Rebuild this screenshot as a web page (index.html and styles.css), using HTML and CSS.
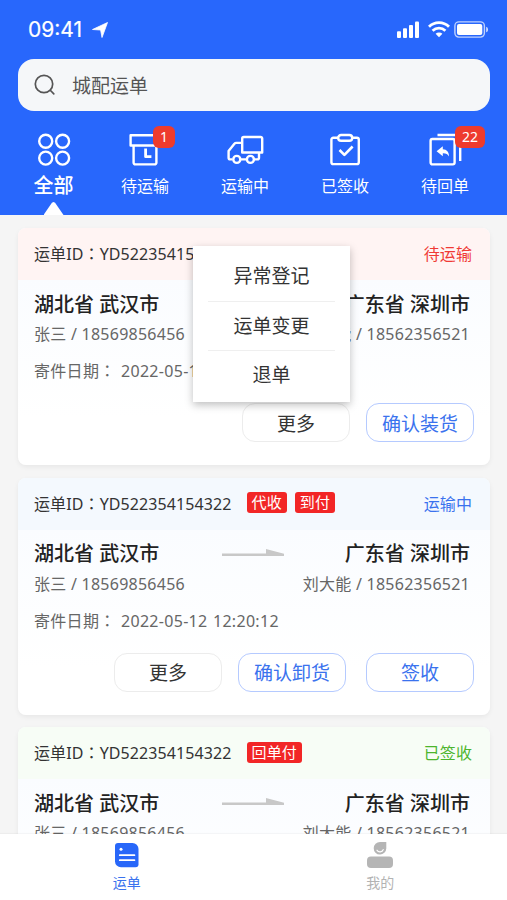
FILE: index.html
```html
<!DOCTYPE html>
<html lang="zh-CN">
  <head>
    <meta charset="utf-8" />
    <meta name="viewport" content="width=device-width, initial-scale=1" />
    <title>城配运单</title>
    <link rel="stylesheet" href="styles.css">
  </head>
  <body>
    <header class="header">
      <div class="status-bar">
        <span class="time">09:41</span>
        <svg class="location" width="16" height="16" viewBox="0 0 16 16">
          <path d="M15.5.5 10 15.5 8.6 8 .5 7.5z" fill="#fff" stroke="#fff" stroke-width=".8" stroke-linejoin="round" />
        </svg>
        <svg class="signal" width="23" height="17" viewBox="0 0 23 17" fill="#fff">
          <rect x="0" y="10.3" width="4" height="6.7" rx="1" />
          <rect x="6" y="7.2" width="4" height="9.8" rx="1" />
          <rect x="12" y="4" width="4" height="13" rx="1" />
          <rect x="18" y="0.5" width="4" height="16.5" rx="1" />
        </svg>
        <svg class="wifi" width="22" height="17" viewBox="0 0 22 17" fill="none" stroke="#fff" stroke-width="2.8">
          <path d="M1 5.8a14.2 14.2 0 0 1 20 0" />
          <path d="M4.6 9.8a9.2 9.2 0 0 1 12.8 0" />
          <path d="M7.6 12.8a4.9 4.9 0 0 1 6.8 0L11 16.2z" fill="#fff" stroke="none" />
        </svg>
        <svg class="battery" width="35" height="17" viewBox="0 0 35 17">
          <rect x="0.9" y="0.9" width="29.5" height="15.2" rx="4" fill="none" stroke="#fff" stroke-opacity=".7" stroke-width="1.4" />
          <rect x="3" y="3" width="25.3" height="11" rx="2" fill="#fff" />
          <path d="M32.2 5.7c2.4.8 2.4 4.8 0 5.6z" fill="#fff" fill-opacity=".8" />
        </svg>
      </div>

      <div class="search">
        <svg width="22" height="22" viewBox="0 0 22 22" fill="none" stroke="#555" stroke-width="1.7" stroke-linecap="round">
          <circle cx="10" cy="10" r="8.7" />
          <path d="M16.5 16.5l3.3 3.3" />
        </svg>
        <span>城配运单</span>
      </div>

      <nav class="tabs">
        <a class="tab active">
          <svg width="34" height="34" viewBox="0 0 34 34" fill="none" stroke="#fff" stroke-width="2.4">
            <circle cx="8.7" cy="8.2" r="6.5" />
            <circle cx="25.6" cy="8.2" r="6.5" />
            <circle cx="8.7" cy="25.1" r="6.5" />
            <circle cx="25.6" cy="25.1" r="6.5" />
          </svg>
          <span>全部</span>
        </a>
        <a class="tab">
          <svg width="34" height="34" viewBox="0 0 34 34" fill="none" stroke="#fff" stroke-width="2.4" stroke-linejoin="round">
            <path d="M2.6 2.3h28.8v10.2H2.6z" />
            <path d="M5.6 12.5v17.2a1.7 1.7 0 0 0 1.7 1.7h19.4a1.7 1.7 0 0 0 1.7-1.7V12.5" />
            <path d="M17.6 15.5v8.2h5.8" stroke-width="2.8" />
          </svg>
          <span>待运输</span>
          <b class="badge">1</b>
        </a>
        <a class="tab">
          <svg width="38" height="34" viewBox="0 0 38 34" fill="none" stroke="#fff" stroke-width="2.4" stroke-linejoin="round">
            <path d="M6.5 26.4H4.3a1.7 1.7 0 0 1-1.7-1.7v-6.8l5.8-7.2a2.4 2.4 0 0 1 1.8-.8h6" />
            <path d="M17.8 4h16.8a1.6 1.6 0 0 1 1.6 1.6v13.9H16.2V5.6A1.6 1.6 0 0 1 17.8 4z" />
            <circle cx="10.8" cy="26.4" r="3.5" />
            <circle cx="24.4" cy="26.4" r="3.5" />
            <path d="M14.5 26.4h6.2M28 26.4h3.4a1.6 1.6 0 0 0 1.6-1.6v-5.3" />
          </svg>
          <span>运输中</span>
        </a>
        <a class="tab">
          <svg width="34" height="34" viewBox="0 0 34 34" fill="none" stroke="#fff" stroke-width="2.4" stroke-linejoin="round">
            <path d="M10 4.7H5.3a1.9 1.9 0 0 0-1.9 1.9v22.6a1.9 1.9 0 0 0 1.9 1.9h23.6a1.9 1.9 0 0 0 1.9-1.9V6.6a1.9 1.9 0 0 0-1.9-1.9h-4.7" />
            <rect x="10.2" y="2" width="14" height="5.8" rx="2.9" />
            <path d="M11.5 17l4.9 4.9 8.2-8.4" stroke-width="2.6" />
          </svg>
          <span>已签收</span>
        </a>
        <a class="tab">
          <svg width="34" height="34" viewBox="0 0 34 34" fill="none" stroke="#fff" stroke-width="2.4" stroke-linejoin="round">
            <rect x="2.6" y="6" width="24" height="25.4" rx="1.8" />
            <path d="M9.5 2h20.7a2 2 0 0 1 2 2v24" />
            <path d="M8.6 18.2l6.2-5v3c4 .2 6.2 2.6 6.2 7.2-1.3-2.4-3.2-3.2-6.2-3.1v3z" fill="#fff" stroke="none" />
          </svg>
          <span>待回单</span>
          <b class="badge wide">22</b>
        </a>
      </nav>
    </header>

    <main class="list">
      <section class="card waiting">
        <div class="card-head">
          <span>运单ID<i class="colon" lang="zh-TW">：</i>YD522354154322</span>
          <em class="state">待运输</em>
        </div>
        <div class="route">
          <strong>湖北省 武汉市</strong>
          <strong>广东省 深圳市</strong>
        </div>
        <div class="people">
          <span>张三 / 18569856456</span>
          <span>刘大能 / 18562356521</span>
        </div>
        <p class="date">寄件日期<i class="colon" lang="zh-TW">：</i> 2022-05-12 12:20:12</p>
        <div class="actions">
          <button>更多</button>
          <button class="primary">确认装货</button>
        </div>
        <ul class="menu">
          <li>异常登记</li>
          <li>运单变更</li>
          <li>退单</li>
        </ul>
      </section>

      <section class="card moving">
        <div class="card-head">
          <span>运单ID<i class="colon" lang="zh-TW">：</i>YD522354154322</span>
          <b class="tag">代收</b>
          <b class="tag">到付</b>
          <em class="state">运输中</em>
        </div>
        <div class="route">
          <strong>湖北省 武汉市</strong>
          <svg class="arrow" width="63" height="8" viewBox="0 0 63 8" fill="#c8c8c8">
            <path d="M0 4.5h44V0l18 4.8L62 7H0z" />
          </svg>
          <strong>广东省 深圳市</strong>
        </div>
        <div class="people">
          <span>张三 / 18569856456</span>
          <span>刘大能 / 18562356521</span>
        </div>
        <p class="date">寄件日期<i class="colon" lang="zh-TW">：</i> 2022-05-12 12:20:12</p>
        <div class="actions">
          <button>更多</button>
          <button class="primary">确认卸货</button>
          <button class="primary last">签收</button>
        </div>
      </section>

      <section class="card signed">
        <div class="card-head">
          <span>运单ID<i class="colon" lang="zh-TW">：</i>YD522354154322</span>
          <b class="tag">回单付</b>
          <em class="state">已签收</em>
        </div>
        <div class="route">
          <strong>湖北省 武汉市</strong>
          <svg class="arrow" width="63" height="8" viewBox="0 0 63 8" fill="#c8c8c8">
            <path d="M0 4.5h44V0l18 4.8L62 7H0z" />
          </svg>
          <strong>广东省 深圳市</strong>
        </div>
        <div class="people">
          <span>张三 / 18569856456</span>
          <span>刘大能 / 18562356521</span>
        </div>
      </section>
    </main>

    <footer class="tabbar">
      <a class="active">
        <svg width="28" height="28" viewBox="0 0 28 28">
          <path d="M5 2h14.5a6 6 0 0 1 6 6v15.3a3 3 0 0 1-3 3H8a6 6 0 0 1-6-6V5a3 3 0 0 1 3-3z" fill="#2867f9" />
          <circle cx="8" cy="8.3" r="1.5" fill="#fff" />
          <path d="M6.8 14.2h14.6M6.8 19.2h14.6" stroke="#fff" stroke-width="1.8" stroke-linecap="round" />
        </svg>
        <span>运单</span>
      </a>
      <a>
        <svg width="28" height="28" viewBox="0 0 28 28" fill="#b5b5b5">
          <path d="M14 1h6.3v6.5A6.3 6.3 0 1 1 14 1z" />
          <path d="M11 9.2a3.4 3.4 0 0 0 6.2-.6" fill="none" stroke="#fff" stroke-width="1.2" stroke-linecap="round" />
          <rect x="1" y="15.5" width="26" height="11.5" rx="4" />
        </svg>
        <span>我的</span>
      </a>
    </footer>
  </body>
</html>
```
FILE: styles.css
```css
* {
  box-sizing: border-box;
}

body {
  height: 100vh;
  margin: 0;
  display: flex;
  flex-direction: column;
  overflow: hidden;
  background-color: #f5f5f5;
  color: #333;
  font-family: "Noto Sans", "Noto Sans CJK SC", sans-serif;
  font-size: 16px;
}

svg {
  display: block;
  flex: none;
}

.header {
  flex: none;
  height: 215px;
  background-color: #2867fc;
  color: #fff;
}

.status-bar {
  height: 59px;
  padding: 0 18px 0 28px;
  display: flex;
  align-items: center;
}

.time {
  font-family: Inter, sans-serif;
  font-size: 21px;
  font-weight: 400;
  -webkit-text-stroke: 0.2px #fff;
}

.location {
  margin-left: 10px;
}

.signal {
  margin-left: auto;
}

.wifi {
  margin: 0 4px 0 8px;
}

.search {
  height: 52px;
  margin: 0 17px 0 18px;
  padding-left: 16px;
  display: flex;
  align-items: center;
  gap: 16px;
  border-radius: 16px;
  background-color: #f5f7f9;
  color: #555;
  font-size: 19px;
}

.tabs {
  height: 104px;
  padding: 22px 12px 0 8px;
  display: flex;
}

.tab {
  position: relative;
  flex: 0 0 100px;
  display: flex;
  flex-direction: column;
  align-items: center;
}

.tab.active {
  flex-basis: 91px;
  margin-right: -4px;
}

.tab span {
  margin-top: 7px;
  line-height: 24px;
}

.tab.active span {
  font-size: 20px;
  font-weight: 500;
}

.tab.active::after {
  content: "";
  width: 20px;
  height: 13px;
  margin-top: 4px;
  background-color: #fff;
  clip-path: polygon(42% 6%, 50% 0, 58% 6%, 100% 100%, 0 100%);
}

.badge {
  position: absolute;
  top: -7px;
  left: 58px;
  width: 22px;
  height: 22px;
  border-radius: 6px;
  background-color: #ee3b2d;
  font-size: 14px;
  font-weight: 400;
  line-height: 22px;
  text-align: center;
}

.badge.wide {
  left: 60px;
  width: 30px;
}

.list {
  flex: 1;
  min-height: 0;
  padding: 13px 17px 0 18px;
  overflow: hidden;
}

.card {
  position: relative;
  height: 237px;
  margin-bottom: 12.5px;
  border-radius: 8px;
  background: linear-gradient(#fafcff 52px, #fff 190px);
  box-shadow: 0 2px 5px rgba(0, 0, 0, 0.06);
}

.card-head {
  height: 52px;
  padding: 0 18px 2px 16px;
  display: flex;
  align-items: center;
  border-radius: 8px 8px 0 0;
  letter-spacing: 0.1px;
}

.waiting .card-head {
  background-color: #fff4f3;
}

.moving .card-head {
  background-color: #f4f9fe;
}

.signed .card-head {
  background-color: #f7fdf6;
}

.colon {
  font-family: "Noto Sans CJK TC", sans-serif;
  font-style: normal;
}

.tag {
  height: 21px;
  margin-left: 8px;
  padding: 0 5px;
  border-radius: 3px;
  background-color: #f22626;
  color: #fff;
  font-size: 15px;
  font-weight: 400;
  line-height: 21px;
}

span + .tag {
  margin-left: 15px;
}

.state {
  margin-left: auto;
  font-style: normal;
}

.waiting .state {
  color: #f03a35;
}

.moving .state {
  color: #3a72ee;
}

.signed .state {
  color: #4db52e;
}

.route,
.people {
  padding: 0 20px 0 16px;
  display: flex;
  justify-content: space-between;
  align-items: center;
}

.route {
  height: 30px;
  margin-top: 8px;
  color: #222;
  font-size: 20px;
}

.route strong {
  font-weight: 500;
}

.arrow {
  margin-left: 2px;
}

.people {
  height: 24px;
  margin-top: 3px;
  color: #666;
  letter-spacing: 0.25px;
}

.date {
  margin: 13px 16px 0;
  color: #666;
  line-height: 24px;
  letter-spacing: 0.3px;
  word-spacing: 1px;
}

.actions {
  margin-top: 20px;
  padding-right: 16px;
  display: flex;
  justify-content: flex-end;
  gap: 16px;
}

button {
  width: 108px;
  height: 39px;
  padding: 0;
  border: 1px solid #ececec;
  border-radius: 13px;
  background-color: #fff;
  color: #333;
  font-family: inherit;
  font-size: 19px;
}

button.primary {
  border-color: #b5caff;
  color: #3a72ee;
}

button.last {
  margin-left: 4px;
}

.menu {
  position: absolute;
  top: 18px;
  left: 175px;
  width: 157px;
  height: 156px;
  margin: 0;
  padding: 6px 15px;
  background-color: #fff;
  box-shadow: 0 3px 8px rgba(0, 0, 0, 0.25);
  color: #333;
  font-size: 19px;
  line-height: 48px;
  text-align: center;
  list-style: none;
}

.menu li:first-child {
  line-height: 49px;
}

.menu li + li {
  border-top: 1px solid #efefef;
}

.tabbar {
  position: relative;
  flex: none;
  height: 66px;
  padding-top: 7px;
  display: flex;
  background-color: #fff;
  box-shadow: 0 -1px 1px rgba(0, 0, 0, 0.03);
}

.tabbar a {
  flex: 1;
  display: flex;
  flex-direction: column;
  align-items: center;
  color: #b3b3b3;
  font-size: 14px;
}

.tabbar span {
  margin-top: 4px;
  line-height: 20px;
}

.tabbar .active {
  color: #3a72ee;
}
```
